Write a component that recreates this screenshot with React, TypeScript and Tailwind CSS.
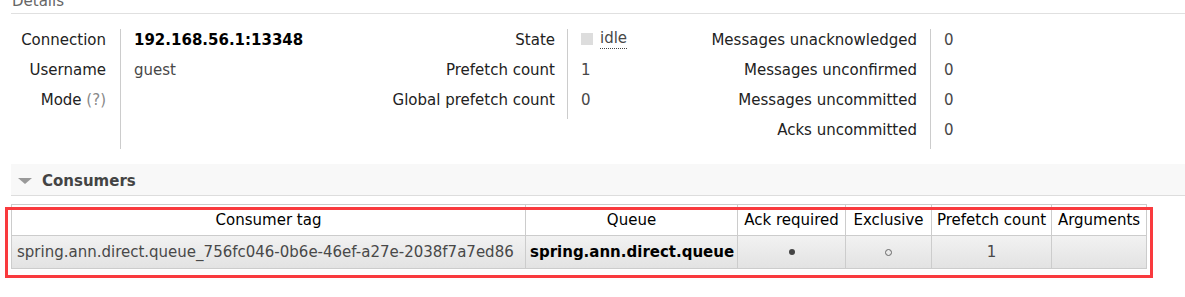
import React from "react";

const font = { fontFamily: '"DejaVu Sans", Verdana, sans-serif' };

function Row({ label }: { label: React.ReactNode }) {
  return <div className="h-[30px] leading-[20px]">{label}</div>;
}

export default function App() {
  const g2 = ["State", "Prefetch count", "Global prefetch count"];
  const g3 = ["Messages unacknowledged", "Messages unconfirmed", "Messages uncommitted", "Acks uncommitted"];
  return (
    <div className="w-[1185px] h-[297px] bg-white overflow-hidden relative text-[15px] text-[#222]" style={font}>
      <div className="ml-[11px] -mt-[7px] h-[21px] border-b border-[#e0e0e0] text-[#666] leading-[16px] pl-[1px]">Details</div>
      <div className="flex mt-[15px]">
        {/* group 1 */}
        <div className="w-[121px] text-right pr-[14px] border-r border-[#ccc]">
          <Row label={<span className="relative top-[1px]">Connection</span>} />
          <Row label={<span className="relative top-[1px]">Username</span>} />
          <Row label={<span className="relative top-[1px]">Mode <span className="text-[#888]">(?)</span></span>} />
        </div>
        <div className="w-[259px] pl-[13px]">
          <div className="h-[30px] leading-[20px] font-bold text-black"><span className="relative top-[1px]">192.168.56.1:13348</span></div>
          <div className="h-[30px] leading-[20px] text-[#484848]"><span className="relative top-[1px]">guest</span></div>
          <div className="h-[30px]" />
        </div>
        {/* group 2 */}
        <div className="w-[188px] text-right pr-[12px] border-r border-[#ccc] self-start">
          {g2.map((l) => (
            <Row key={l} label={<span className="relative top-[1px]">{l}</span>} />
          ))}
        </div>
        <div className="w-[131px] pl-[13px] text-[#484848]">
          <div className="h-[30px] leading-[20px] flex items-start gap-[7px]">
            <span className="inline-block w-[12px] h-[12px] bg-[#ddd] mt-[4px]" />
            <span className="border-b border-dotted border-[#444] leading-[19px]">idle</span>
          </div>
          <div className="h-[30px] leading-[20px]"><span className="relative top-[1px]">1</span></div>
          <div className="h-[30px] leading-[20px]"><span className="relative top-[1px]">0</span></div>
        </div>
        {/* group 3 */}
        <div className="w-[232px] text-right pr-[13px] border-r border-[#ccc]">
          {g3.map((l) => (
            <Row key={l} label={<span className="relative top-[1px]">{l}</span>} />
          ))}
        </div>
        <div className="pl-[13px] text-[#484848]">
          {g3.map((l) => (
            <div key={l} className="h-[30px] leading-[20px]"><span className="relative top-[1px]">0</span></div>
          ))}
        </div>
      </div>

      {/* Consumers header */}
      <div className="ml-[11px] mt-[15px] h-[32px] bg-[#f8f8f8] border-b border-[#ddd] flex items-center">
        <svg width="14" height="8" viewBox="0 0 14 8" className="ml-[7px] mt-[4px]">
          <polygon points="0,0 14,0 7,6" fill="#999" />
        </svg>
        <span className="ml-[10px] mt-[3px] font-bold text-[#444] text-[15px]">Consumers</span>
      </div>

      {/* Table */}
      <table className="ml-[11px] mt-[8px] border-collapse table-fixed text-[15px]" style={{ width: 1135 }}>
        <colgroup>
          <col className="w-[514px]" />
          <col className="w-[212px]" />
          <col className="w-[108px]" />
          <col className="w-[86px]" />
          <col className="w-[120px]" />
          <col className="w-[95px]" />
        </colgroup>
        <thead>
          <tr className="h-[31px] bg-white">
            <th className="border border-[#ccc] font-normal text-black whitespace-nowrap">Consumer tag</th>
            <th className="border border-[#ccc] font-normal text-black whitespace-nowrap">Queue</th>
            <th className="border border-[#ccc] font-normal text-black whitespace-nowrap">Ack required</th>
            <th className="border border-[#ccc] font-normal text-black whitespace-nowrap">Exclusive</th>
            <th className="border border-[#ccc] font-normal text-black whitespace-nowrap">Prefetch count</th>
            <th className="border border-[#ccc] font-normal text-black whitespace-nowrap">Arguments</th>
          </tr>
        </thead>
        <tbody>
          <tr className="h-[33px] bg-gradient-to-b from-[#f2f2f2] to-[#e2e2e2] text-[#484848]">
            <td className="border border-[#ccc] px-[5px] whitespace-nowrap">spring.ann.direct.queue_756fc046-0b6e-46ef-a27e-2038f7a7ed86</td>
            <td className="border border-[#ccc] px-[4px] font-bold text-black whitespace-nowrap">spring.ann.direct.queue</td>
            <td className="border border-[#ccc] text-center">
              <span className="inline-block w-[6px] h-[6px] rounded-full bg-[#444] align-middle" />
            </td>
            <td className="border border-[#ccc] text-center">
              <span className="inline-block w-[7px] h-[7px] rounded-full border border-[#666] align-middle" />
            </td>
            <td className="border border-[#ccc] text-center">1</td>
            <td className="border border-[#ccc]"></td>
          </tr>
        </tbody>
      </table>

      {/* red highlight overlay */}
      <div className="absolute left-[5px] top-[207px] w-[1148px] h-[71px] border-[3px] border-[#f93a3e] pointer-events-none" />
    </div>
  );
}
